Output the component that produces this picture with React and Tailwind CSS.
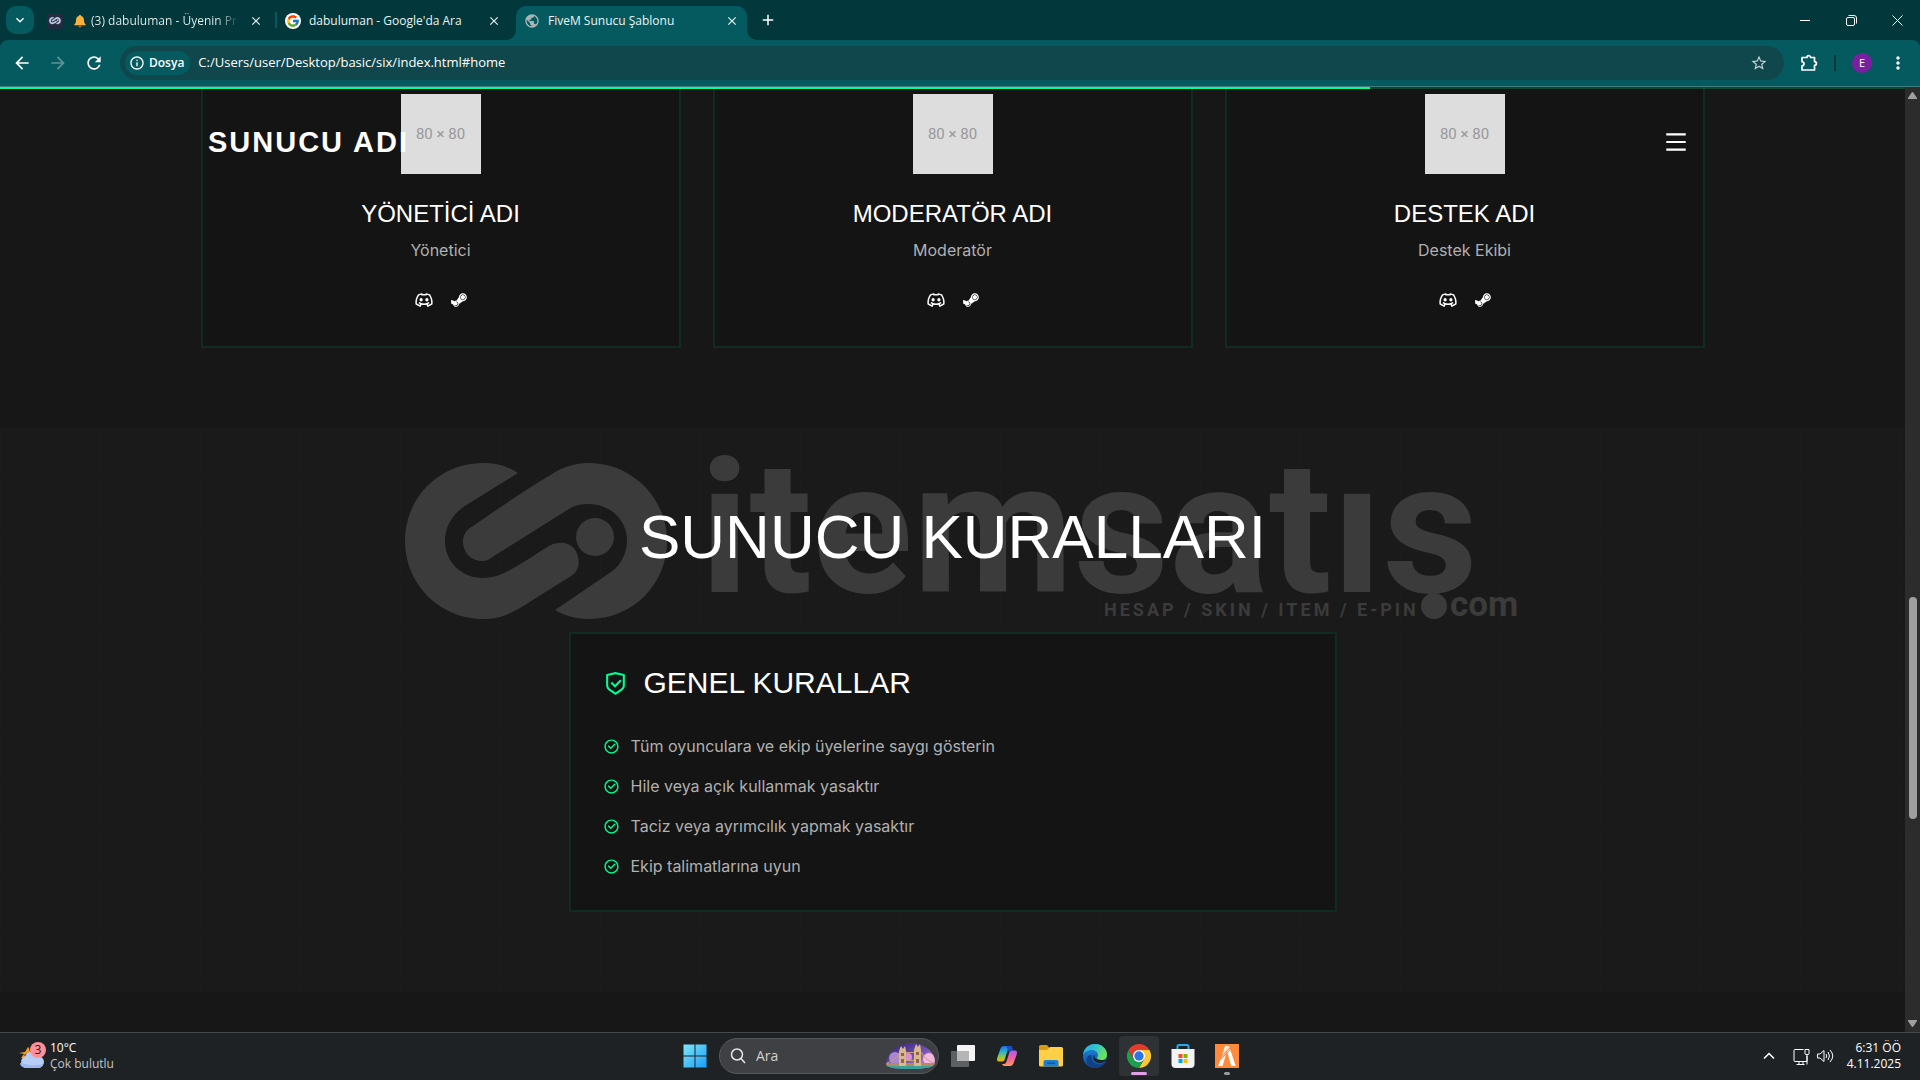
import React from "react";
import { FcGoogle } from "react-icons/fc";
import { SiFivem } from "react-icons/si";
import { FaSteamSymbol } from "react-icons/fa";
import { RiCheckboxCircleLine, RiDiscordLine, RiMenuLine, RiShieldCheckLine } from "react-icons/ri";
import { MdArrowBack, MdArrowForward, MdClose, MdAdd, MdRefresh, MdStarOutline, MdMoreVert, MdInfoOutline, MdPublic, MdKeyboardArrowDown } from "react-icons/md";

const TEAM = [
  { name: "YÖNETİCİ ADI", role: "Yönetici" },
  { name: "MODERATÖR ADI", role: "Moderatör" },
  { name: "DESTEK ADI", role: "Destek Ekibi" },
];

const RULES = [
  "Tüm oyunculara ve ekip üyelerine saygı gösterin",
  "Hile veya açık kullanmak yasaktır",
  "Taciz veya ayrımcılık yapmak yasaktır",
  "Ekip talimatlarına uyun",
];

const SCROLL_PROGRESS = 71.9;

function BellIcon() {
  return (
    <svg viewBox="0 0 14 14" className="h-[14px] w-[14px] shrink-0">
      <path d="M7 1c.8 0 1.2.5 1.2 1.1C10 2.700 11 4.200 11 6.200c0 2.200.6 3.200 1.700 4.300v.8H1.300v-.8C2.400 9.400 3 8.400 3 6.200c0-2 1-3.500 2.800-4.100C5.800 1.500 6.200 1 7 1z" fill="#fbb03b" />
      <path d="M5.400 11.700h3.200c0 .9-.7 1.500-1.600 1.500s-1.600-.6-1.600-1.500z" fill="#c9772a" />
    </svg>
  );
}

function SwirlPaths() {
  return (
    <>
      <path d="M517 472C507 465 495 462 482 462C438 462 404 497 404 540C404 583 439 618 482 618C499 618 511 612 524 604C541 593 556 584 570 575C577 571 579 563 577 556C575 546 567 541 558 542C552 542 548 545 543 548C531 556 520 563 509 569C500 574 491 577 482 577C461 577 444 561 444 540C444 524 453 511 467 503Z" />
      <path d="M554 609C564 615 576 618 588 618C632 618 666 583 666 540C666 497 631 462 588 462C573 462 562 466 551 473C524 489 498 507 472 525C465 529 462 534 462 541C462 551 470 560 481 560C486 560 489 558 493 555L568 508C574 504 581 503 588 503C609 503 626 519 626 539C626 552 620 564 610 571Z" />
      <circle cx="594" cy="536" r="19" />
    </>
  );
}

function Watermark() {
  return (
    <svg viewBox="404 459 1116 160" className="h-[160px] w-[1116px] shrink-0 overflow-visible fill-[#3b3b3b]" aria-hidden="true">
      <SwirlPaths />
      <text x="699" y="591" fontFamily="Roboto, sans-serif" fontWeight="700" fontSize="186">itemsatıs</text>
      <circle cx="1433" cy="605" r="13" />
      <text x="1103" y="615" fontFamily="Roboto, sans-serif" fontWeight="700" fontSize="18" letterSpacing="3">HESAP / SKIN / ITEM / E-PIN</text>
      <text x="1449" y="615" fontFamily="Roboto, sans-serif" fontWeight="700" fontSize="35">com</text>
    </svg>
  );
}

function Tab({ icon, title, active }) {
  return (
    <div className={active ? "relative ml-px flex h-[34px] w-[231px] items-center gap-2 self-end rounded-t-[10px] bg-[#055a60] pb-1 pl-2 pr-[9px]" : "flex h-[34px] w-[236px] items-center gap-2 self-end pb-1 pl-2 pr-[13px]"}>
      {active && (
        <>
          <svg viewBox="0 0 10 10" className="absolute bottom-0 -left-[10px] h-[10px] w-[10px] fill-[#055a60]"><path d="M10 0v10H0A10 10 0 0 0 10 0z" /></svg>
          <svg viewBox="0 0 10 10" className="absolute bottom-0 -right-[10px] h-[10px] w-[10px] fill-[#055a60]"><path d="M0 0v10h10A10 10 0 0 1 0 0z" /></svg>
        </>
      )}
      {icon}
      <button type="button" className="flex min-w-0 flex-1 items-center gap-1 overflow-hidden whitespace-nowrap text-left text-[12px] leading-4 text-[#e8f3f3]">{title}</button>
      <button type="button" aria-label="Sekmeyi kapat" className="text-[#e8f3f3]"><MdClose size={14} className="-mr-px" /></button>
    </div>
  );
}

function TabStrip() {
  return (
    <div className="flex h-10 items-center bg-[#02383c] pl-[6px] text-white">
      <button type="button" aria-label="Sekme ara" className="mr-[5px] flex h-7 w-7 items-center justify-center rounded-[10px] bg-[#055a60]"><MdKeyboardArrowDown size={16} /></button>
      <Tab
        icon={
          <span className="mr-[2px] flex h-4 w-4 shrink-0 items-center justify-center rounded bg-[#232b40]">
            <svg viewBox="404 460 264 160" className="w-3 fill-[#b8c4dc]"><SwirlPaths /></svg>
          </span>
        }
        title={<><BellIcon /><span className="w-[148px] overflow-hidden bg-gradient-to-r from-[#e8f3f3] from-85% to-transparent bg-clip-text text-transparent">(3) dabuluman - Üyenin Profili</span></>}
      />
      <span className="h-4 w-[2px] bg-[#055a60]" />
      <Tab icon={<span className="flex h-4 w-4 shrink-0 items-center justify-center rounded-full bg-white"><FcGoogle size={14} /></span>} title="dabuluman - Google'da Ara" />
      <span className="w-[2px]" />
      <Tab active icon={<MdPublic size={16} className="shrink-0 text-[#a9b4b5]" />} title="FiveM Sunucu Şablonu" />
      <button type="button" aria-label="Yeni sekme" className="ml-3"><MdAdd size={18} /></button>
      <div className="ml-auto flex h-full">
        <button type="button" aria-label="Simge durumuna küçült" className="flex w-[46px] items-center justify-center"><span className="h-px w-[10px] bg-white" /></button>
        <button type="button" aria-label="Önceki boyut" className="flex w-[46px] items-center justify-center">
          <svg viewBox="0 0 11 11" className="h-[11px] w-[11px] fill-none stroke-white"><rect x=".5" y="2.500" width="8" height="8" rx="1.500" /><path d="M2.500.5H8a2.500 2.500 0 0 1 2.500 2.500v5.500" /></svg>
        </button>
        <button type="button" aria-label="Kapat" className="flex w-[46px] items-center justify-center">
          <svg viewBox="0 0 11 11" className="h-[11px] w-[11px] fill-none stroke-white"><path d="M.5.5l10 10M10.500.5l-10 10" /></svg>
        </button>
      </div>
    </div>
  );
}

function Toolbar() {
  return (
    <div className="bg-[#02383c]">
      <div className="flex h-[47px] items-center rounded-t-lg border-b border-[#3f7d82] bg-[#055a60] px-3 text-white">
        <button type="button" aria-label="Geri"><MdArrowBack size={20} /></button>
        <button type="button" aria-label="İleri" className="ml-4 text-[#5f9498]"><MdArrowForward size={20} /></button>
        <button type="button" aria-label="Yenile" className="ml-4"><MdRefresh size={20} /></button>
        <div className="ml-4 flex h-[34px] flex-1 items-center rounded-full bg-[#0f474c] pl-[5px] pr-4">
          <button type="button" className="flex h-6 items-center gap-1 rounded-full bg-[#055a60] pl-1 pr-[6px] text-[12px] font-semibold"><MdInfoOutline size={16} />Dosya</button>
          <input aria-label="Adres" defaultValue="C:/Users/user/Desktop/basic/six/index.html#home" className="ml-2 flex-1 bg-transparent text-[13px] text-white outline-none" />
          <button type="button" aria-label="Yer işareti" className="text-[#c3d0d1]"><MdStarOutline size={18} /></button>
        </div>
        <button type="button" aria-label="Uzantılar" className="ml-4">
          <svg viewBox="0 0 18 18" className="h-[18px] w-[18px]">
            <path d="M2 3.500h5a1.800 1.800 0 0 1 3.600 0H14.500V7.600a1.800 1.800 0 0 1 0 3.800V16H2v-4.200a2 2 0 0 0 0-4z" fill="none" stroke="white" strokeWidth="1.700" strokeLinejoin="round" />
          </svg>
        </button>
        <span className="ml-4 h-4 w-[2px] bg-[#02383c]" />
        <button type="button" className="ml-4 flex h-5 w-5 items-center justify-center rounded-full bg-[#7b1fa2] text-[11px] text-white">E</button>
        <button type="button" aria-label="Menü" className="ml-4"><MdMoreVert size={20} /></button>
      </div>
    </div>
  );
}

function TeamCard({ name, role }) {
  return (
    <article className="flex flex-1 flex-col items-center border-x-2 border-b-2 border-[#122b22] bg-[#141414] pt-[7px] pb-9">
      <div className="flex h-20 w-20 items-center justify-center bg-[#dddddd] font-[Roboto,sans-serif] text-[15px] text-[#999999]">80 × 80</div>
      <h3 className="mt-6 font-['Liberation_Sans',Arial,sans-serif] text-2xl leading-8 text-white">{name}</h3>
      <p className="mt-2 text-base leading-6 text-[#b0b0b0]">{role}</p>
      <div className="mt-7 flex items-center gap-4 text-white">
        <a href="#discord" aria-label="Discord"><RiDiscordLine size={20} /></a>
        <a href="#steam" aria-label="Steam"><FaSteamSymbol size={18} /></a>
      </div>
    </article>
  );
}

function Page() {
  return (
    <div className="relative min-w-0 flex-1 overflow-hidden bg-[#171717] font-[Inter,sans-serif]">
      <div className="absolute inset-x-0 top-0 z-20 h-[2px] bg-[#00ff95]/20">
        <div className="h-full bg-[#00ff95]" style={{ width: `${SCROLL_PROGRESS}%` }} />
      </div>
      <header className="absolute inset-x-0 top-0 z-10 flex h-[110px] items-center justify-between px-52">
        <a href="#home" className="font-['Liberation_Sans',Arial,sans-serif] text-[29px] leading-8 font-bold tracking-[2px] text-white">SUNUCU ADI</a>
        <button type="button" aria-label="Menüyü aç" className="p-2 text-white"><RiMenuLine size={26} /></button>
      </header>

      <section className="mx-auto flex max-w-[1600px] gap-8 px-12 pb-20">
        {TEAM.map((m) => <TeamCard key={m.name} {...m} />)}
      </section>

      <section className="relative bg-[#1a1a1a] bg-[linear-gradient(#1c1c1c_1px,transparent_1px),linear-gradient(90deg,#1c1c1c_1px,transparent_1px)] bg-[size:50px_50px] py-20">
        <div className="absolute inset-x-0 top-8 flex justify-center pl-5"><Watermark /></div>
        <h2 className="relative text-center font-['Liberation_Sans',Arial,sans-serif] text-[62px] leading-[58px] text-white">SUNUCU KURALLARI</h2>
        <div className="relative mx-auto mt-[66px] max-w-3xl border-2 border-[#122b22] bg-[#141414] p-8">
          <h3 className="flex items-center gap-4 font-['Liberation_Sans',Arial,sans-serif] text-[30px] leading-[34px] text-white">
            <RiShieldCheckLine size={25} className="text-[#00ff95]" />GENEL KURALLAR
          </h3>
          <ul className="mt-[34px] space-y-4">
            {RULES.map((rule) => (
              <li key={rule} className="flex items-center gap-[11px] text-base leading-6 text-[#b0b0b0]">
                <RiCheckboxCircleLine size={17} className="shrink-0 text-[#00ff95]" />{rule}
              </li>
            ))}
          </ul>
        </div>
      </section>
    </div>
  );
}

function ScrollBar() {
  return (
    <div className="relative flex w-[15px] flex-col items-center justify-between bg-[#2c2c2c] py-[5px]">
      <svg viewBox="0 0 9 7" className="h-[7px] w-[9px] fill-[#9f9f9f]"><path d="M3.500.8a1.200 1.200 0 0 1 2 0L9 6v1H0V6z" /></svg>
      <div className="absolute top-[54%] h-[222px] w-2 rounded-full bg-[#9f9f9f]" />
      <svg viewBox="0 0 9 7" className="h-[7px] w-[9px] fill-[#9f9f9f]"><path d="M3.500 6.200a1.200 1.200 0 0 0 2 0L9 1V0H0v1z" /></svg>
    </div>
  );
}

function WeatherIcon() {
  return (
    <svg viewBox="0 0 28 28" className="h-7 w-7">
      <path d="M11 6l1 4-6 3 3 3H3l3-4-5-1 6-1 3-5z" fill="#f39a1e" />
      <path d="M8 26a6 6 0 0 1-1-11.500A7 7 0 0 1 20 14a6 6 0 0 1 0 12z" fill="#b6cdf6" />
      <path d="M2 21a6 5 0 0 0 6 5h12a5 5 0 0 0 5-4c-6 2-16 1-23-1z" fill="#9dbaf0" />
      <circle cx="20" cy="8" r="8" fill="#ff8f9b" />
      <text x="20" y="12" textAnchor="middle" fontSize="12" fontFamily="Open Sans, sans-serif" fill="#2a1518">3</text>
    </svg>
  );
}

function BridgeArt() {
  return (
    <svg viewBox="0 0 49 26" className="h-[26px] w-[49px] shrink-0">
      <defs>
        <linearGradient id="sky" x1="0" y1="0" x2="1" y2="1"><stop offset="0" stopColor="#2b1d66" /><stop offset=".5" stopColor="#6d4db0" /><stop offset="1" stopColor="#e59ad0" /></linearGradient>
        <clipPath id="dome"><path d="M0 21C1 9 12 0 25 0s24 9 24 19c0 5-8 7-24 7S0 25 0 21z" /></clipPath>
      </defs>
      <g clipPath="url(#dome)">
        <path d="M0 0h49v26H0z" fill="url(#sky)" />
        <circle cx="9" cy="15" r="6" fill="#a987cf" /><circle cx="43" cy="16" r="6" fill="#f2b8e0" /><circle cx="22" cy="14" r="4" fill="#d98fd0" />
        <path d="M0 20h49v3H0z" fill="#b58a62" />
        <path d="M13 24V8l2-5 2 3 2-3 1 5v16zM28 24V7l2-6 2 3 2-3 1 6v17z" fill="#d9b98c" />
        <path d="M15 10h3v3h-3zM30 9h3v3h-3zM15 16h3v4h-3zM30 16h3v4h-3z" fill="#8d6450" />
        <path d="M20 9h8v1h-8zM20 17h8v1h-8z" fill="#c7a07a" />
        <path d="M1 20q9-3 12-10M35 9q4 8 13 11" fill="none" stroke="#c7a07a" />
        <path d="M0 23h49v3H0z" fill="#39a39b" />
      </g>
    </svg>
  );
}

function CopilotIcon() {
  return (
    <svg viewBox="0 0 24 24" className="h-6 w-6">
      <defs>
        <linearGradient id="cpA" x1="0" y1="0" x2="0" y2="1"><stop offset="0" stopColor="#1c6ff0" /><stop offset=".4" stopColor="#2fb5c9" /><stop offset=".7" stopColor="#8cc74d" /><stop offset="1" stopColor="#ffb000" /></linearGradient>
        <linearGradient id="cpB" x1="0" y1="0" x2="0" y2="1"><stop offset="0" stopColor="#a95df2" /><stop offset=".5" stopColor="#f0609e" /><stop offset="1" stopColor="#ff9a5c" /></linearGradient>
      </defs>
      <path d="M14.500 2H9C7 2 5.800 3.500 5 6l-2.500 7C1.500 16 2 17.500 4 17.500h3c2 0 2.600-1.500 3.200-3.500l2.300-7.500c.5-1.500 1-2.500 2.500-2.500h2c-.5-1.300-1-2-2.500-2z" fill="url(#cpA)" />
      <path d="M9.500 22H15c2 0 3.200-1.500 4-4l2.500-7c1-3 .5-4.500-1.500-4.500h-3c-2 0-2.600 1.500-3.200 3.500l-2.300 7.500c-.5 1.500-1 2.500-2.500 2.500H7c.5 1.300 1 2 2.500 2z" fill="url(#cpB)" />
      <path d="M11 2h4c1.500 0 2 .8 2.500 2.300L18 6.500h-1c-1.500 0-2.300.6-2.900 2l-.9-2.200z" fill="#1a4fc4" />
    </svg>
  );
}

function ExplorerIcon() {
  return (
    <svg viewBox="0 0 24 24" className="h-6 w-6">
      <path d="M0 2.500A1.500 1.500 0 0 1 1.500 1H8l2.500 3v3H0z" fill="#d99a12" />
      <path d="M0 6h8l3-3h11.500A1.500 1.500 0 0 1 24 4.500V21a1.500 1.500 0 0 1-1.500 1.500h-21A1.500 1.500 0 0 1 0 21z" fill="#ffcf48" />
      <path d="M4.500 22.500V18a2 2 0 0 1 2-2h11a2 2 0 0 1 2 2v4.500z" fill="#1c7fd0" />
      <path d="M8 18.500h8V20H8z" fill="#0d5aa5" />
    </svg>
  );
}

function EdgeIcon() {
  return (
    <svg viewBox="0 0 24 24" className="h-6 w-6">
      <defs>
        <linearGradient id="edA" x1="0" y1="0" x2="1" y2=".4"><stop offset="0" stopColor="#2aa8e8" /><stop offset=".5" stopColor="#2fc3d3" /><stop offset="1" stopColor="#6be05a" /></linearGradient>
        <linearGradient id="edB" x1="0" y1="0" x2="0" y2="1"><stop offset="0" stopColor="#1b8bdc" /><stop offset="1" stopColor="#0d4fa6" /></linearGradient>
      </defs>
      <circle cx="12" cy="12" r="12" fill="url(#edB)" />
      <path d="M0 11C.8 4.500 5.500 0 12 0c7 0 12 5 12 10.500 0 3.500-2.500 5.500-5.500 5.500-2.500 0-4.500-.8-4.500-2 0-.7 1-1.200 1-3C15 8.500 12.500 6 9 6 4.500 6 1 8.500 0 11z" fill="url(#edA)" />
      <path d="M9 11c-1.500 5 2 9.500 7 9.500 2.500 0 4.500-1 6-2.500-2 4-6 6-10 6-5 0-8.500-3.500-8.500-8 0-3 2-5 5.500-5z" fill="#123f86" />
      <path d="M24 15.500c-2 3-7.500 4.500-11 2.500-3-1.800-3.500-5-1.500-8-.3 2-.3 4.500 3.500 5.500 3.500 1 7 .5 9 0z" fill="#1f2225" />
    </svg>
  );
}

function ChromeIcon() {
  return (
    <svg viewBox="0 0 24 24" className="h-6 w-6">
      <path d="M12 6h10.400A12 12 0 0 1 12 24l5.200-9z" fill="#fcc934" />
      <path d="M17.200 15L12 24A12 12 0 0 1 1.600 6l5.200 9z" fill="#1e9e4f" />
      <path d="M12 6h10.400A12 12 0 0 0 1.600 6l5.200 9z" fill="#e33b2e" />
      <circle cx="12" cy="12" r="6" fill="white" />
      <circle cx="12" cy="12" r="4.700" fill="#2d74e8" />
    </svg>
  );
}

function StoreIcon() {
  return (
    <svg viewBox="0 0 24 24" className="h-6 w-6">
      <path d="M6.500 6V2.500A1.500 1.500 0 0 1 8 1h8a1.500 1.500 0 0 1 1.500 1.500V6" fill="none" stroke="#29a9ea" strokeWidth="2" />
      <path d="M.5 5h23v15a4 4 0 0 1-4 4h-15a4 4 0 0 1-4-4z" fill="#f3f3f3" />
      <path d="M7.500 10h4v4h-4z" fill="#f25022" /><path d="M12.500 10h4v4h-4z" fill="#7fba00" /><path d="M7.500 15h4v4h-4z" fill="#00a4ef" /><path d="M12.500 15h4v4h-4z" fill="#ffb900" />
    </svg>
  );
}

function TaskButton({ label, active, children }) {
  return (
    <button type="button" aria-label={label} className={active ? "relative flex h-10 w-10 items-center justify-center rounded bg-[#2f3235]" : "relative flex h-10 w-10 items-center justify-center"}>{children}</button>
  );
}

function Taskbar() {
  return (
    <footer className="grid h-12 shrink-0 grid-cols-[1fr_auto_1fr] items-center border-t border-[#47484a] bg-[#1f2225] pb-px font-['Open_Sans',sans-serif] text-[12px] leading-4 text-white">
      <button type="button" className="flex items-center gap-1 pl-[18px] text-left">
        <WeatherIcon />
        <span>10°C<br /><span className="text-[#c4c4c6]">Çok bulutlu</span></span>
      </button>
      <div className="flex items-center gap-1 pl-[2px]">
        <TaskButton label="Başlat">
          <svg viewBox="0 0 24 24" className="h-6 w-6">
            <defs><linearGradient id="win" x1="0" y1="0" x2="1" y2="1"><stop offset="0" stopColor="#7fe6fb" /><stop offset="1" stopColor="#1a9df5" /></linearGradient></defs>
            <path d="M.5.5h11v11H.5zM12.500.5h11v11h-11zM.5 12.500h11v11H.5zM12.500 12.500h11v11h-11z" fill="url(#win)" />
          </svg>
        </TaskButton>
        <label className="flex h-9 w-[220px] items-center rounded-full border border-[#55575a] bg-[#3e4043] pl-[10px] pr-[3px]">
          <svg viewBox="0 0 16 16" className="h-4 w-4 shrink-0 fill-none stroke-[#e6e6e6] stroke-[1.500]"><circle cx="7" cy="6.500" r="5.500" /><path d="M11 10.500l4 4.500" /></svg>
          <input aria-label="Ara" placeholder="Ara" className="ml-[10px] min-w-0 flex-1 bg-transparent text-[14px] placeholder:text-[#d0d0d0]" />
          <BridgeArt />
        </label>
        <TaskButton label="Görev görünümü">
          <svg viewBox="0 0 24 24" className="h-6 w-6"><rect x="0" y="7" width="18" height="16" rx="1" fill="#5d5f61" /><rect x="6" y="1" width="18" height="16" rx="1" fill="#f4f4f4" /><path d="M6 7h12v10H6z" fill="#b4b5b6" /></svg>
        </TaskButton>
        <TaskButton label="Copilot"><CopilotIcon /></TaskButton>
        <TaskButton label="Dosya Gezgini"><ExplorerIcon /></TaskButton>
        <TaskButton label="Edge"><EdgeIcon /></TaskButton>
        <TaskButton label="Chrome" active><ChromeIcon /><span className="absolute bottom-px h-[3px] w-4 rounded-full bg-[#e0a0e6]" /></TaskButton>
        <TaskButton label="Store"><StoreIcon /></TaskButton>
        <TaskButton label="FiveM">
          <span className="flex h-6 w-6 items-center justify-center bg-[#ff8a3c]"><SiFivem size={20} /></span>
          <span className="absolute bottom-px h-[3px] w-[6px] rounded-full bg-[#9a9a9a]" />
        </TaskButton>
      </div>
      <div className="flex items-center justify-end pr-[19px]">
        <svg viewBox="0 0 12 8" className="h-2 w-3 fill-none stroke-white stroke-[1.500]"><path d="M1 6.500l5-5 5 5" /></svg>
        <svg viewBox="0 0 17 17" className="ml-[18px] h-[17px] w-[17px] fill-none stroke-white"><path d="M10.500 1.500H2A1 1 0 0 0 1 2.500v10a1 1 0 0 0 1 1h12V8M6 13.500v2.500M10 13.500v2.500M3.500 16.500h8M12 1.500h4v4a1 1 0 0 1-1 1h-2a1 1 0 0 1-1-1zM14 6.500v10" /></svg>
        <svg viewBox="0 0 17 14" className="ml-[7px] h-[14px] w-[17px] fill-none stroke-white"><path d="M.5 5v4H3l4 3.500v-11L3 5zM9 5q1.500 2 0 4M11 3q3 4 0 8M13 1q5.500 6 0 12" /></svg>
        <time className="ml-[13px] text-right">6:31 ÖÖ<br />4.11.2025</time>
      </div>
    </footer>
  );
}

export default function App() {
  return (
    <div className="flex h-screen flex-col overflow-hidden bg-[#171717] font-['Open_Sans',sans-serif]">
      <TabStrip />
      <Toolbar />
      <main className="flex min-h-0 flex-1">
        <Page />
        <ScrollBar />
      </main>
      <Taskbar />
    </div>
  );
}
